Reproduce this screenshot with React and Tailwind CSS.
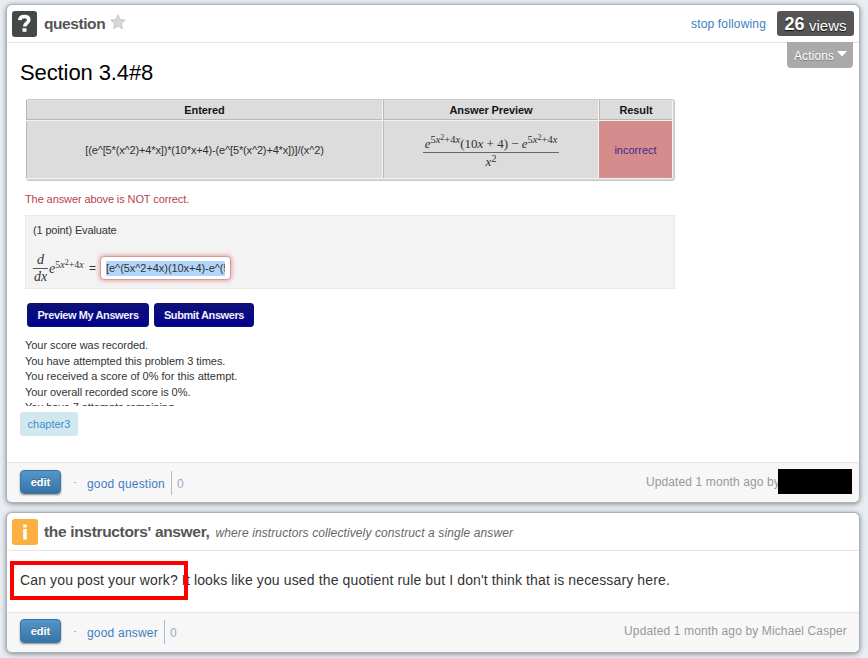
import React from "react";

function Card({ className = "", children }) {
  return (
    <section
      className={`w-[852px] overflow-hidden rounded-[5px] bg-white shadow-[0_0_0_1px_#b0b4b8,0_1px_5px_1px_#7f858c] ${className}`}
    >
      {children}
    </section>
  );
}

function Exponent({ className = "" }) {
  return (
    <span className={`relative -top-[5px] ${className}`}>
      5<i>x</i>
      <span className="relative -top-[3px] text-[8px]">2</span>+4<i>x</i>
    </span>
  );
}

function Footer({ label, count, className = "pt-[8px]", children }) {
  return (
    <footer
      className={`flex h-[41px] items-start border-t border-[#e6e6e6] bg-[#f7f7f7] pl-[13px] text-[12px] text-[#999] ${className}`}
    >
      <button className="-mt-px h-[24px] w-[41px] rounded-[4px] border border-[#3a74a5] bg-linear-to-b from-[#5596c8] to-[#3674a8] text-[11px] leading-[22px] font-bold text-white shadow-[0_1px_2px_#888] [text-shadow:0_-1px_0_#00000040]">
        edit
      </button>
      <span className="mt-[11px] ml-[13px] h-px w-[2px] bg-[#9fb4cc]" />
      <a className="mt-[4px] ml-[11px] leading-[18px] tracking-[0.2px] whitespace-nowrap text-[#3e7ebf]">{label}</a>
      <span className="ml-[6px] h-[24px] w-px bg-[#adbccd]" />
      <span className="mt-[4px] ml-[5px] leading-[18px] text-[#98adc5]">{count}</span>
      {children}
    </footer>
  );
}

function ResultsTable() {
  return (
    <div className="grid h-[82px] w-[649px] grid-cols-[356px_215px_73px] grid-rows-[20px_57px] gap-px rounded-[3px] border border-l-0 border-[#c9c9c9] bg-[#f2f2f2] pr-[2px] pb-px text-[11px] shadow-[inset_-1px_-1px_0_#d4d4d4]">
      {["Entered", "Answer Preview", "Result"].map((t) => (
        <div
          key={t}
          className="border-b border-l border-[#b8b8b8] bg-[#dcdcdc] text-center leading-[20px] font-bold tracking-[-0.1px] text-[#151515]"
        >
          {t}
        </div>
      ))}
      <div className="border-l border-[#b8b8b8] bg-[#dcdcdc] text-center leading-[58px] whitespace-nowrap text-[#303030]">
        <span className="tracking-[-0.15px]">[(e^[5*(x^2)+4*x])*(10*x+4)-(e^[5*(x^2)+4*x])]/(x^2)</span>
      </div>
      <div className="flex flex-col items-center border-l border-[#b8b8b8] bg-[#dcdcdc] pt-[12px] font-['Liberation_Serif',serif] text-[13px] text-[#303030]">
        <div className="h-[20px] w-[136px] border-b border-[#666] text-center leading-[21px] whitespace-nowrap">
          <i>e</i>
          <Exponent className="text-[10.5px]" />
          (10<i>x</i> + 4) − <i>e</i>
          <Exponent className="text-[10.5px]" />
        </div>
        <div className="leading-[18px]">
          <i>x</i>
          <span className="relative -top-[4px] text-[10px]">2</span>
        </div>
      </div>
      <div className="bg-[#d58c8c] text-center leading-[58px] text-[#402a88]">incorrect</div>
    </div>
  );
}

function HomeworkCapture() {
  return (
    <div className="ml-[18px] h-[307px] w-[660px] overflow-hidden text-[11px] text-[#333]">
      <div className="ml-px">
        <ResultsTable />
      </div>
      <p className="mt-[11px] leading-[14px] tracking-[-0.1px] text-[#b8444a]">The answer above is NOT correct.</p>
      <div className="mt-[9px] h-[74px] w-[650px] border border-[#e9e9e9] bg-[#f3f3f3] pt-[7px] pl-[7px]">
        <p className="leading-[14px] tracking-[-0.15px]">(1 point) Evaluate</p>
        <div className="mt-[15px] flex">
          <div className="w-[15px] text-center font-['Liberation_Serif',serif] text-[14px] leading-[16px] italic">
            <div className="h-[17px] border-b border-[#555]">d</div>
            <div className="leading-[15px]">dx</div>
          </div>
          <span className="mt-[7px] ml-px w-[35px] font-['Liberation_Serif',serif] text-[14px] leading-[20px] whitespace-nowrap">
            <i>e</i>
            <Exponent className="text-[10px]" />
          </span>
          <span className="mt-[9px] ml-[5px] text-[12px] leading-[14px]">=</span>
          <div className="mt-[4px] ml-[4px] h-[24px] w-[131px] rounded-[4px] border border-[#d19c9e] bg-white px-[5px] py-[4px] shadow-[0_0_4px_1px_#e5a7a9]">
            <div className="h-[15px] w-[119px] overflow-hidden bg-[#b2d6fb] leading-[15px] tracking-[-0.06px] whitespace-nowrap">
              [e^(5x^2+4x)(10x+4)-e^(5
            </div>
          </div>
        </div>
      </div>
      <div className="mt-[14px] ml-[2px] flex gap-[5px] text-[11px] font-bold tracking-[-0.4px] text-[#f0f0f8]">
        <button className="h-[24px] w-[122px] rounded-[3px] border border-[#101070] bg-linear-to-b from-[#101078] to-[#00008e]">
          Preview My Answers
        </button>
        <button className="h-[24px] w-[100px] rounded-[3px] border border-[#101070] bg-linear-to-b from-[#101078] to-[#00008e]">
          Submit Answers
        </button>
      </div>
      <div className="mt-[11px] leading-[15.5px]">
        <p className="tracking-[-0.05px]">Your score was recorded.</p>
        <p className="tracking-[-0.04px]">You have attempted this problem 3 times.</p>
        <p>You received a score of 0% for this attempt.</p>
        <p className="tracking-[-0.05px]">Your overall recorded score is 0%.</p>
        <p className="tracking-[-0.08px]">You have 7 attempts remaining.</p>
      </div>
    </div>
  );
}

export default function App() {
  return (
    <main className="h-[658px] w-[868px] overflow-hidden bg-[#e8edf2] pt-[5px] pl-[7px] font-['Liberation_Sans',Arial,sans-serif]">
      <Card className="h-[497px]">
        <header className="flex h-[38px] border-b border-[#e6e6e6] pl-[5px]">
          <span className="mt-[6px] flex h-[26px] w-[25px] items-center justify-center rounded-[3px] bg-[#454849]">
            <svg width="15" height="20" viewBox="0 0 15 20" fill="none" stroke="#fff">
              <path d="M2.8 6.2C3 3.5 5 2.5 7.5 2.5c2.6 0 4.3 1.3 4.3 3.4 0 3-4 3-4 6.6" strokeWidth="3.6" />
              <path d="M5.5 16h4" strokeWidth="3.4" />
            </svg>
          </span>
          <h2 className="mt-[9px] ml-[7px] w-[61px] text-[15.5px] leading-[20px] font-bold tracking-[-0.42px] text-[#555]">
            question
          </h2>
          <svg className="mt-[9px] ml-[5px]" width="16" height="16" viewBox="0 0 16 16">
            <path
              d="M8 .8l2.1 4.7 5.1.6-3.8 3.5 1 5L8 12.1l-4.4 2.5 1-5L.8 6.1l5.1-.6z"
              fill="#d8d8d8"
              stroke="#bdbdbd"
              strokeWidth=".8"
            />
          </svg>
          <a className="mt-[10px] ml-auto text-[12px] leading-[18px] tracking-[0.16px] text-[#3e7ebf]">stop following</a>
          <div className="mt-[6px] mr-[5px] ml-[11px] h-[25px] w-[77px] rounded-[3px] bg-[#555] text-center leading-[26px] whitespace-nowrap text-white [text-shadow:0_1px_1px_#111]">
            <b className="text-[18px]">26</b> <span className="relative top-px text-[15px]">views</span>
          </div>
        </header>
        <div className="flex h-[56px] justify-between">
          <h1 className="mt-[17px] ml-[13px] text-[22px] leading-[26px] tracking-[-0.1px] text-black">Section 3.4#8</h1>
          <div className="mt-[-1px] mr-[6px] flex h-[26px] w-[66px] rounded-b-[4px] bg-[#aaa] pl-[7px] text-[12px] leading-[28px] tracking-[0.1px] text-white [text-shadow:0_1px_1px_#777]">
            Actions
            <svg className="mt-[9px] ml-[3px]" width="10" height="6" viewBox="0 0 10 6">
              <path d="M0 0h10L5 5.5z" fill="#fff" />
            </svg>
          </div>
        </div>
        <HomeworkCapture />
        <div className="h-[56px] pt-[6px] pl-[13px]">
          <span className="block h-[24px] w-[58px] rounded-[3px] bg-[#d2e8f0] text-center text-[11px] leading-[25px] text-[#3f8fc8]">
            chapter3
          </span>
        </div>
        <Footer label="good question" count="0">
          <span className="mt-[2px] -mr-[2px] ml-auto leading-[18px] tracking-[0.12px]">Updated 1 month ago by</span>
          <span className="relative -mt-[2px] mr-[7px] h-[25px] w-[74px] bg-black" />
        </Footer>
      </Card>

      <Card className="mt-[11px] h-[139px]">
        <header className="flex h-[38px] border-b border-[#e6e6e6] pl-[5px]">
          <span className="mt-[6px] flex h-[26px] w-[26px] items-center justify-center rounded-[3px] bg-[#fbb040]">
            <svg width="6" height="18" viewBox="0 0 6 18" fill="#fff">
              <path d="M1.2 1.5h3.6v3H1.2zM1.2 6h3.6v10.5H1.2z" />
            </svg>
          </span>
          <h2 className="mt-[9px] ml-[6px] text-[15.5px] leading-[20px] font-bold tracking-[-0.33px] whitespace-nowrap text-[#555]">
            the instructors' answer,
          </h2>
          <em className="mt-[11px] ml-[6px] text-[12px] leading-[18px] tracking-[0.11px] text-[#666]">
            where instructors collectively construct a single answer
          </em>
        </header>
        <div className="relative h-[61px] pt-[19px] pl-[13px] text-[14px] leading-[20px] tracking-[0.13px] whitespace-nowrap text-[#333]">
          Can you post your work? It looks like you used the quotient rule but I don't think that is necessary here.
          <span className="absolute top-[10px] left-[3px] h-[39px] w-[178px] border-4 border-[#f00]" />
        </div>
        <Footer label="good answer" count="0" className="pt-[7px]">
          <span className="mt-[2px] mr-[12px] ml-auto leading-[18px] tracking-[0.13px]">
            Updated 1 month ago by Michael Casper
          </span>
        </Footer>
      </Card>
    </main>
  );
}
